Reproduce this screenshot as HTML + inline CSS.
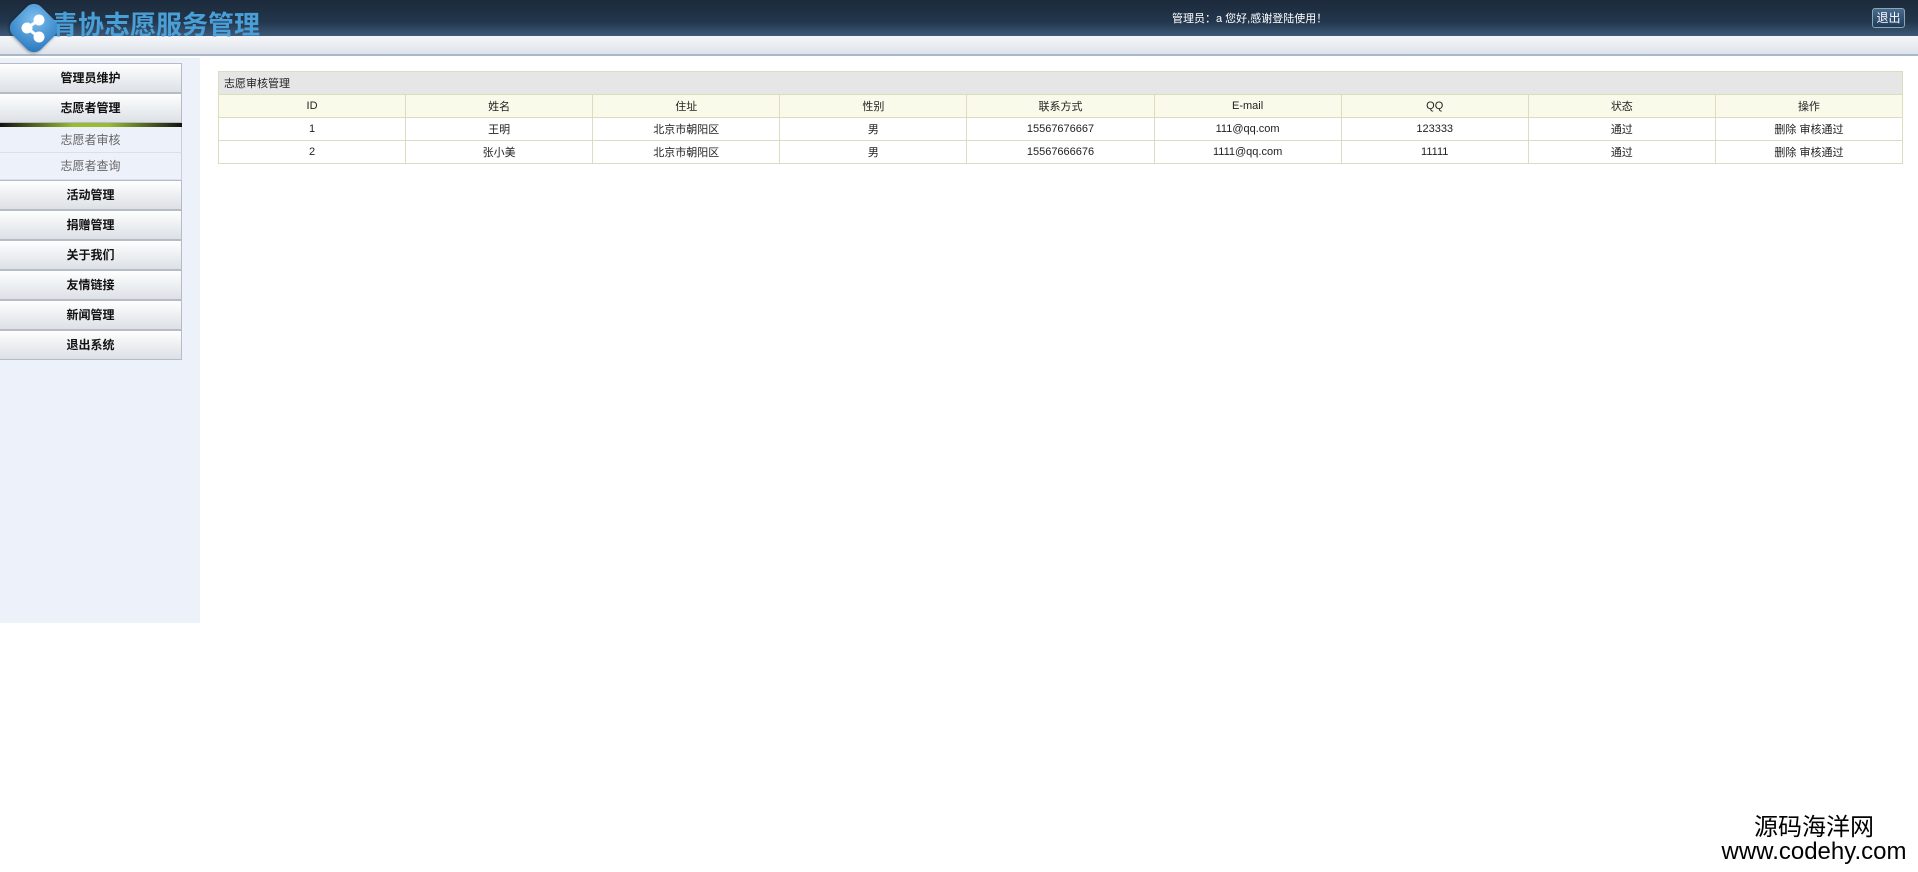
<!DOCTYPE html>
<html><head><meta charset="utf-8"><style>
*{margin:0;padding:0;box-sizing:border-box}
body{width:1918px;height:872px;background:#fff;font-family:"Liberation Sans","Noto Sans CJK SC",sans-serif;font-size:12px;color:#222;position:relative;overflow:hidden}
.top{position:absolute;left:0;top:0;width:1918px;height:36px;background:linear-gradient(#1c2a3a,#22364c 60%,#3d5a78)}
.band{position:absolute;left:0;top:36px;width:1918px;height:20px;background:linear-gradient(#f4f6f8,#dfe4ea);border-bottom:2px solid #a9b8c8}
.logo{position:absolute;left:14px;top:8px;width:40px;height:40px;border-radius:10px;transform:rotate(45deg);background:radial-gradient(circle at 35% 35%,#7cc0f0,#1f6fb8);box-shadow:0 1px 3px #0006}
.icon{position:absolute;left:14px;top:8px}
.title{position:absolute;left:52px;top:5px;font-size:26px;font-weight:bold;color:#4a9fd8}
.welcome{position:absolute;left:1172px;top:10px;color:#fff;font-size:11px}
.exit{position:absolute;left:1872px;top:8px;width:33px;height:20px;border:1px solid #8aa;border-radius:3px;background:linear-gradient(#4a6a90,#1e3a5c);color:#fff;font-size:12px;text-align:center;line-height:18px}
.side{position:absolute;left:0;top:58px;width:200px;height:565px;background:#edf1f9}
.btn{position:absolute;left:0;width:182px;height:30px;background:linear-gradient(#fff,#f0f2f4 40%,#dde1e6);border:1px solid #b5bcc6;border-left:none;font-weight:bold;text-align:center;line-height:28px;color:#111;font-size:12px}
.sub{position:absolute;left:0;width:182px;text-align:center;color:#666;line-height:26px;font-size:12px;border-bottom:1px solid #dde;background:#edf1f9;border-right:1px solid #ccd}
.bar{position:absolute;left:0;top:123px;width:182px;height:4px;background:linear-gradient(90deg,#111,#9b3 40%,#9b3 60%,#111)}
table{position:absolute;left:218px;top:71px;width:1685px;border-collapse:collapse;table-layout:fixed;font-size:11px}
td{border:1px solid #dcdcc0;height:23px;text-align:center;color:#222}
.t td{background:#e6e6e6;text-align:left;padding-left:5px}
.h td{background:#fafaea}
.wm{position:absolute;left:1710px;top:816px;width:208px;text-align:center;color:#000;font-size:24px;line-height:24px}
</style></head><body>
<div class="top"></div><div class="band"></div>
<div class="logo"></div>
<svg class="icon" width="40" height="40" viewBox="0 0 40 40"><g stroke="#fff" stroke-width="3" fill="#fff"><line x1="13" y1="20" x2="25" y2="12"/><line x1="13" y1="20" x2="25" y2="29"/><circle cx="13" cy="20" r="4"/><circle cx="25" cy="12" r="4"/><circle cx="25" cy="29" r="4"/></g></svg>
<div class="title">青协志愿服务管理</div>
<div class="welcome">管理员：a 您好,感谢登陆使用！</div>
<div class="exit">退出</div>
<div class="side"></div>
<div class="btn" style="top:63px">管理员维护</div>
<div class="btn" style="top:93px">志愿者管理</div>
<div class="bar"></div>
<div class="sub" style="top:127px;height:26px">志愿者审核</div>
<div class="sub" style="top:153px;height:27px">志愿者查询</div>
<div class="btn" style="top:180px">活动管理</div>
<div class="btn" style="top:210px">捐赠管理</div>
<div class="btn" style="top:240px">关于我们</div>
<div class="btn" style="top:270px">友情链接</div>
<div class="btn" style="top:300px">新闻管理</div>
<div class="btn" style="top:330px">退出系统</div>
<table>
<tr class="t"><td colspan="9">志愿审核管理</td></tr>
<tr class="h"><td>ID</td><td>姓名</td><td>住址</td><td>性别</td><td>联系方式</td><td>E-mail</td><td>QQ</td><td>状态</td><td>操作</td></tr>
<tr><td>1</td><td>王明</td><td>北京市朝阳区</td><td>男</td><td>15567676667</td><td>111@qq.com</td><td>123333</td><td>通过</td><td>删除 审核通过</td></tr>
<tr><td>2</td><td>张小美</td><td>北京市朝阳区</td><td>男</td><td>15567666676</td><td>1111@qq.com</td><td>11111</td><td>通过</td><td>删除 审核通过</td></tr>
</table>
<div class="wm">源码海洋网<br>www.codehy.com</div>
</body></html>
